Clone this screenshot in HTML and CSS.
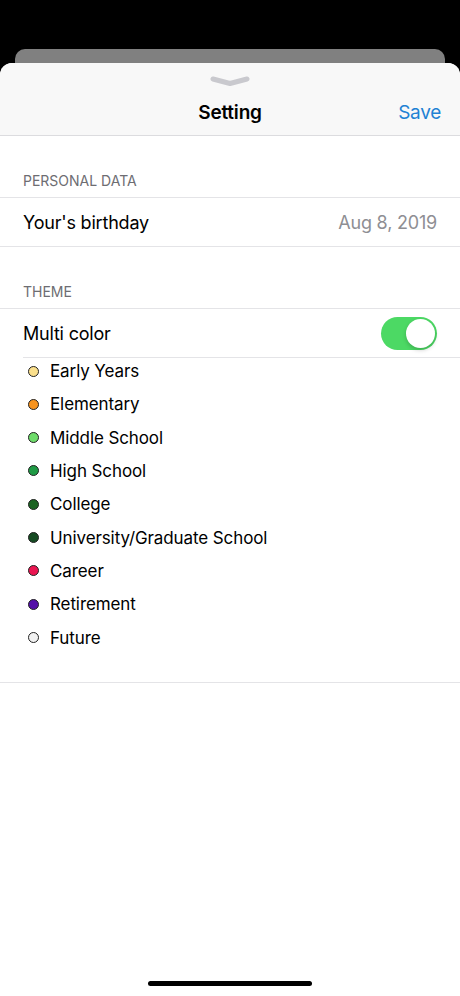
FILE: index.html
```html
<!DOCTYPE html>
<html lang="en">
<head>
  <meta charset="UTF-8" />
  <meta name="viewport" content="width=device-width, initial-scale=1.0"/>
  <title>Setting</title>
  <link rel="stylesheet" href="styles.css">
</head>
<body>

  <!-- Card behind the sheet -->
  <div class="back-card"></div>

  <!-- Settings sheet -->
  <div class="sheet">
    <div class="sheet-head">
      <div class="grabber">
        <svg width="40" height="10" viewBox="0 0 40 10">
          <path d="M3 3 L20 7.5 L37 3" fill="none" stroke="#c9c9ce" stroke-width="5" stroke-linecap="round" stroke-linejoin="round"/>
        </svg>
      </div>
      <div class="title-bar">
        <span></span>
        <h1 class="title">Setting</h1>
        <a class="save">Save</a>
      </div>
    </div>

    <div class="section-label">PERSONAL DATA</div>
    <div class="row row-last">
      <span>Your's birthday</span>
      <span class="value">Aug 8, 2019</span>
    </div>

    <div class="section-label">THEME</div>
    <div class="row row-inset">
      <span>Multi color</span>
      <div class="toggle on"><div class="knob"></div></div>
    </div>

    <ul class="legend">
      <li><i class="dot" style="background:#fbe08c"></i>Early Years</li>
      <li><i class="dot" style="background:#f7931e"></i>Elementary</li>
      <li><i class="dot" style="background:#6edc6a"></i>Middle School</li>
      <li><i class="dot" style="background:#1f9a45"></i>High School</li>
      <li><i class="dot" style="background:#1c6322"></i>College</li>
      <li><i class="dot" style="background:#154a22"></i>University/Graduate School</li>
      <li><i class="dot" style="background:#ea1551"></i>Career</li>
      <li><i class="dot" style="background:#5410a8"></i>Retirement</li>
      <li><i class="dot" style="background:#f1f1f1"></i>Future</li>
    </ul>

    <div class="home-bar"></div>
  </div>

</body>
</html>
```

FILE: styles.css
```css
/* Global */
body {
  margin: 0;
  height: 996px;
  background: #000;
  overflow: hidden;
  font-family: Inter, "Liberation Sans", sans-serif;
  color: #000;
}
/* Card peeking behind the sheet */
.back-card {
  margin: 49px 15px 0;
  height: 14px;
  background: #808080;
  border-radius: 10px 10px 0 0;
}
/* Sheet */
.sheet {
  height: 933px;
  background: #fff;
  border-radius: 12px 12px 0 0;
  overflow: hidden;
  display: flex;
  flex-direction: column;
}
.sheet-head {
  background: #f8f8f8;
  border-bottom: 1px solid #dcdcdf;
  height: 73px;
  box-sizing: border-box;
}
.grabber {
  display: flex;
  justify-content: center;
  padding-top: 13px;
  height: 10px;
}
.title-bar {
  display: grid;
  grid-template-columns: 1fr auto 1fr;
  align-items: center;
  padding: 13px 19px 0;
}
.title {
  margin: 0;
  font-size: 19px;
  font-weight: 600;
  line-height: 28px;
  letter-spacing: -0.2px;
}
.save {
  justify-self: end;
  color: #1f82d4;
  font-size: 19px;
  line-height: 28px;
  letter-spacing: -0.3px;
}
/* Section headers */
.section-label {
  padding: 36px 23px 8px;
  line-height: 17px;
  font-size: 14px;
  color: #6d6d72;
  border-bottom: 1px solid #e4e4e7;
}
/* Rows */
.row {
  display: flex;
  justify-content: space-between;
  align-items: center;
  height: 48px;
  padding: 0 23px;
  font-size: 18px;
  letter-spacing: -0.2px;
}
.row-last {
  border-bottom: 1px solid #e4e4e7;
}
.row-inset {
  margin-left: 23px;
  padding-left: 0;
  border-bottom: 1px solid #e4e4e7;
}
.value {
  color: #8e8e93;
}
/* Toggle */
.toggle {
  width: 56px;
  height: 33px;
  border-radius: 17px;
  background: #e5e5ea;
  position: relative;
}
.toggle.on {
  background: #4cd964;
}
.knob {
  position: absolute;
  top: 2px;
  right: 2px;
  width: 29px;
  height: 29px;
  border-radius: 50%;
  background: #fff;
  box-shadow: 0 2px 4px rgba(0, 0, 0, 0.2);
}
/* Colour legend */
.legend {
  list-style: none;
  margin: 0;
  padding: 0 23px 31px;
  display: flex;
  flex-direction: column;
  gap: 7.33px;
  border-bottom: 1px solid #e4e4e7;
}
.legend li {
  display: flex;
  align-items: center;
  height: 26px;
  font-size: 17px;
  letter-spacing: -0.1px;
}
.dot {
  width: 9px;
  height: 9px;
  border: 1px solid #222;
  border-radius: 50%;
  margin: 0 11px 0 5px;
}
/* Home indicator */
.home-bar {
  margin: auto auto 10px;
  width: 164px;
  height: 5px;
  border-radius: 3px;
  background: #000;
}
```
